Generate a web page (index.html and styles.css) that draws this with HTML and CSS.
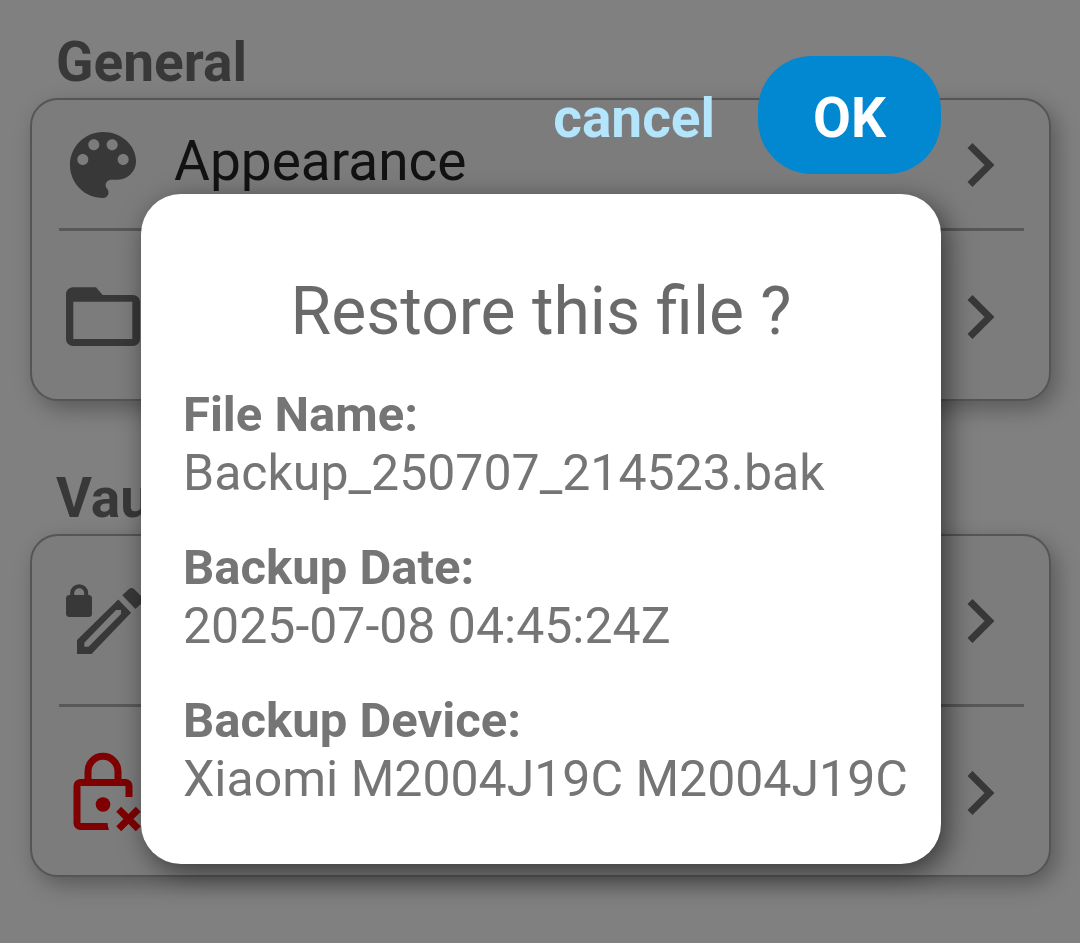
FILE: index.html
```
<!DOCTYPE html>
<html lang="en">
<head>
<meta charset="utf-8">
<meta name="viewport" content="width=device-width, initial-scale=1">
<title>Restore this file ?</title>
<link rel="stylesheet" href="styles.css">
</head>
<body>
<main class="settings">
  <section class="group">
    <h2 class="group-title">General</h2>
    <div class="card">
      <button class="row row-compact" type="button">
        <svg class="icon" viewBox="1.1 1.1 21.8 21.8" aria-hidden="true"><path fill-rule="evenodd" d="M12 3c-4.97 0-9 4.03-9 9s4.03 9 9 9c.83 0 1.5-.67 1.5-1.5 0-.39-.15-.74-.39-1.01-.23-.26-.38-.61-.38-.99 0-.83.67-1.5 1.5-1.5H16c2.76 0 5-2.24 5-5 0-4.42-4.03-8-9-8zm-5.5 9c-.83 0-1.5-.67-1.5-1.5S5.670 9 6.500 9 8 9.670 8 10.500 7.330 12 6.500 12zm3-4C8.670 8 8 7.330 8 6.500S8.670 5 9.500 5s1.500.67 1.500 1.500S10.330 8 9.500 8zm5 0c-.83 0-1.500-.67-1.500-1.500S13.670 5 14.500 5s1.500.67 1.500 1.500S15.330 8 14.500 8zm3 4c-.83 0-1.500-.67-1.500-1.500S16.670 9 17.500 9s1.500.67 1.500 1.500-.67 1.500-1.500 1.500z"/></svg>
        <span class="label">Appearance</span>
        <svg class="chevron" viewBox="0 0 30 48" aria-hidden="true"><path d="M4 4.500L23.500 24L4 43.500"/></svg>
      </button>
      <button class="row" type="button" aria-label="Files">
        <svg class="icon" viewBox="0 0 80 80" aria-hidden="true"><path fill-rule="evenodd" d="M10 10.300H33L39.700 18H70a7 7 0 0 1 7 7V62a7 7 0 0 1-7 7H10a7 7 0 0 1-7-7V17.300a7 7 0 0 1 7-7zM10.300 24.700V62H69.300V24.700z"/></svg>
        <svg class="chevron" viewBox="0 0 30 48" aria-hidden="true"><path d="M4 4.500L23.500 24L4 43.500"/></svg>
      </button>
    </div>
  </section>
  <section class="group">
    <h2 class="group-title">Vault</h2>
    <div class="card">
      <button class="row" type="button" aria-label="Edit vault">
        <svg class="icon" viewBox="0 0 80 80" aria-hidden="true">
          <rect x="3" y="14" width="26" height="22" rx="3.500"/>
          <path class="line line-thin" d="M9.200 16V12.200a7 7 0 0 1 14 0V16"/>
          <path fill-rule="evenodd" d="M14 73V59L55.300 18.500L68 31.700L28.500 73zM21.300 65.700H25.500L58 33V29H53L21.300 61.700z"/>
          <path d="M59.300 14.300L66 8q2.500-2 5 0L80 17q2 2 0 4L72.500 28z"/>
        </svg>
        <svg class="chevron" viewBox="0 0 30 48" aria-hidden="true"><path d="M4 4.500L23.500 24L4 43.500"/></svg>
      </button>
      <button class="row" type="button" aria-label="Delete vault">
        <svg class="icon icon-danger" viewBox="0 0 80 80" aria-hidden="true">
          <path class="line" d="M25 29.500V18.300a15 15 0 0 1 30 0V29.500"/>
          <path class="line" d="M44.500 73.500H17.500a3.500 3.500 0 0 1-3.500-3.500V33a3.500 3.500 0 0 1 3.500-3.500H62.500a3.500 3.500 0 0 1 3.500 3.500V44"/>
          <path d="M44 70L46 77H44z"/>
          <circle cx="40" cy="51.500" r="7.300"/>
          <path class="line" d="M55.700 56.200L75.300 75.800M75.300 56.200L55.700 75.800"/>
        </svg>
        <svg class="chevron" viewBox="0 0 30 48" aria-hidden="true"><path d="M4 4.500L23.500 24L4 43.500"/></svg>
      </button>
    </div>
  </section>
</main>
<div class="overlay">
  <div class="popup" role="dialog" aria-modal="true" aria-labelledby="dialog-title">
    <div class="actions">
      <button class="cancel" type="button">cancel</button>
      <button class="ok" type="button">OK</button>
    </div>
    <div class="dialog">
      <h1 class="dialog-title" id="dialog-title">Restore this file ?</h1>
      <dl class="details">
        <div><dt>File Name:</dt><dd>Backup_250707_214523.bak</dd></div>
        <div><dt>Backup Date:</dt><dd>2025-07-08 04:45:24Z</dd></div>
        <div><dt>Backup Device:</dt><dd>Xiaomi M2004J19C M2004J19C</dd></div>
      </dl>
    </div>
  </div>
</div>
</body>
</html>
```
FILE: styles.css
```
* { box-sizing: border-box; }
body {
  margin: 0;
  min-height: 100vh;
  position: relative;
  background: #808080;
  font-family: Roboto, "Liberation Sans", sans-serif;
}
button {
  border: 0;
  padding: 0;
  background: none;
  font: inherit;
  cursor: pointer;
}
.settings {
  display: flex;
  flex-direction: column;
  gap: 65px;
  padding: 30px 29px 48px 30px;
}
.group-title {
  margin: 0 0 4px;
  padding-left: 26px;
  font-size: 55px;
  line-height: 64px;
  font-weight: 700;
  color: #383838;
}
.card {
  padding: 0 25px 0 27px;
  border: 2px solid #555;
  border-radius: 28px;
  background: #7c7c7c;
  box-shadow: 6px 8px 22px rgba(0, 0, 0, 0.3);
}
.row {
  display: flex;
  align-items: center;
  width: 100%;
  height: 168px;
  padding: 2px 28px 0 4px;
  color: #121212;
}
.row-compact { height: 128px; }
.row + .row {
  height: 171px;
  padding-top: 4px;
  border-top: 3px solid #585858;
}
.icon {
  flex: none;
  width: 80px;
  height: 80px;
  overflow: visible;
  fill: #383838;
  stroke: none;
}
.icon-danger { fill: #7f0000; }
.icon .line {
  fill: none;
  stroke: #383838;
  stroke-width: 7;
}
.icon .line-thin { stroke-width: 4; }
.icon-danger .line { stroke: #7f0000; }
.label {
  margin-left: 31px;
  padding-bottom: 8px;
  font-size: 55px;
  line-height: 64px;
}
.chevron {
  flex: none;
  width: 30px;
  height: 48px;
  margin-left: auto;
  fill: none;
  stroke: #383838;
  stroke-width: 7;
}
.overlay {
  position: absolute;
  inset: 0;
  padding: 56px 31px 56px 33px;
}
.popup {
  max-width: 800px;
  margin: 0 auto;
}
.actions {
  display: flex;
  justify-content: flex-end;
  align-items: center;
  gap: 43px;
  margin-bottom: 20px;
  font-size: 55px;
  line-height: 64px;
  font-weight: 700;
}
.cancel {
  padding-top: 6px;
  color: #b3e5fc;
}
.ok {
  padding: 30px 55px 24px;
  border-radius: 54px;
  background: #0288d1;
  color: #fff;
}
.dialog {
  padding: 80px 32px 56px;
  border-radius: 40px;
  background: #fff;
  color: #757575;
  box-shadow: 6px 8px 28px rgba(0, 0, 0, 0.55);
}
.dialog-title {
  margin: 0 0 36px;
  font-size: 66px;
  line-height: 76px;
  font-weight: 400;
  text-align: center;
  color: #6a6a6a;
}
.details {
  display: flex;
  flex-direction: column;
  gap: 37px;
  margin: 0;
  padding-left: 10px;
  font-size: 50px;
  line-height: 58px;
}
.details dt {
  font-size: 49px;
  font-weight: 700;
}
.details dd { margin: 0; }
```
